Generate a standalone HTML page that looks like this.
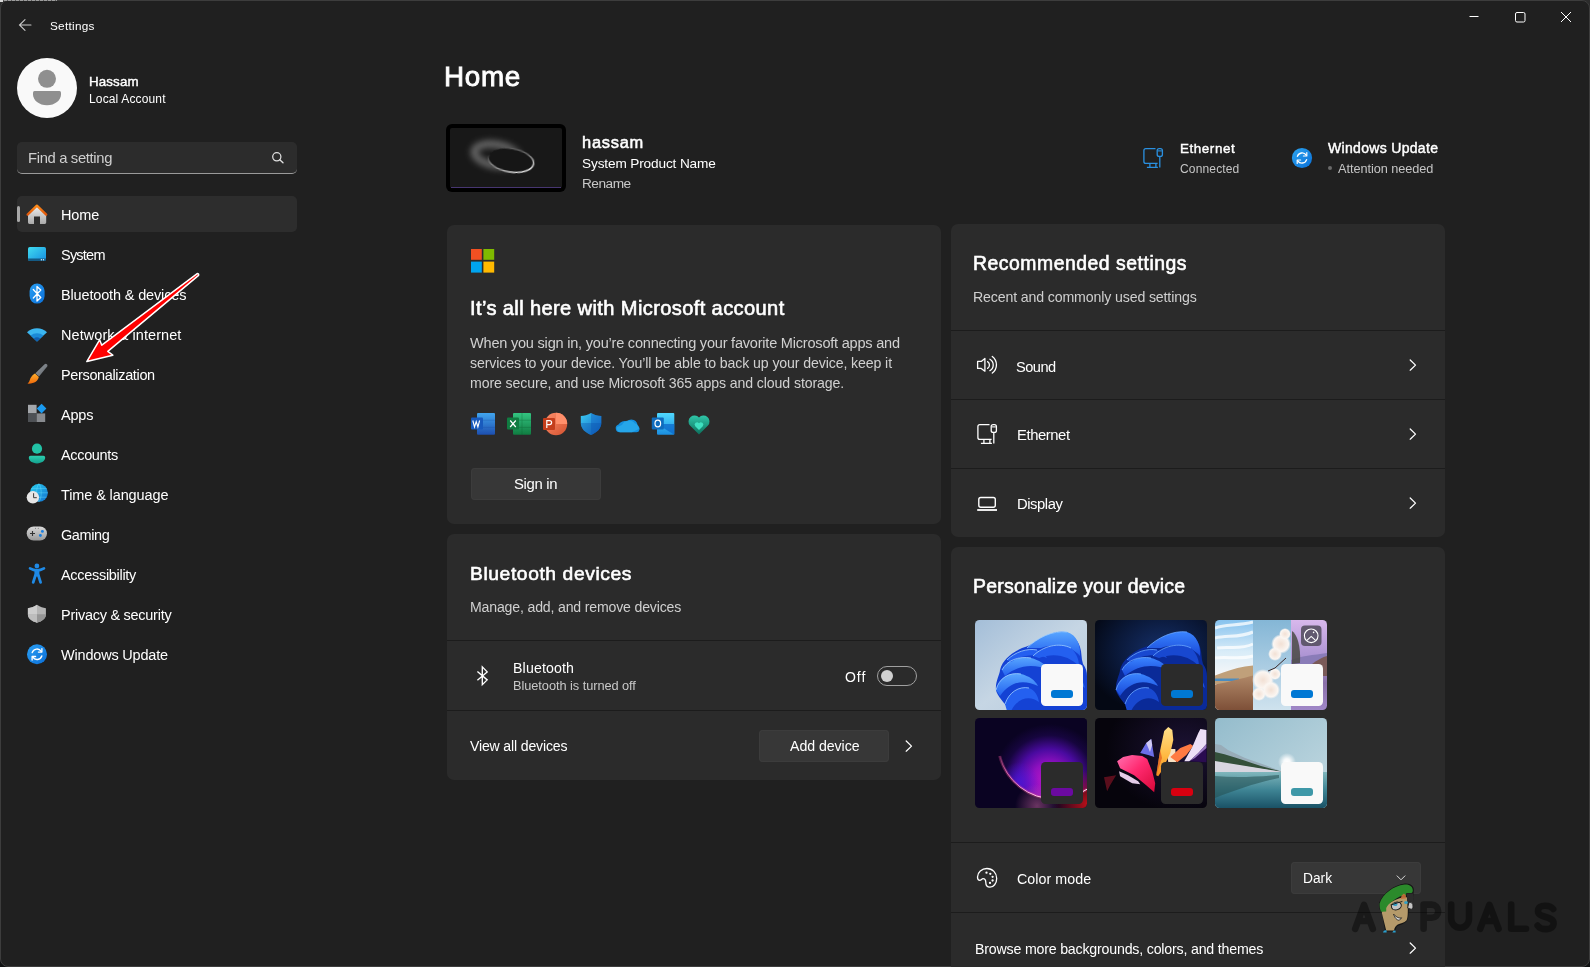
<!DOCTYPE html><html><head><meta charset="utf-8"><style>
*{margin:0;padding:0;box-sizing:border-box}
html,body{width:1590px;height:967px;overflow:hidden;background:linear-gradient(#2c2c2c 0 50%,#101112 50%)}
body{position:relative;font-family:"Liberation Sans",sans-serif}
.t{position:absolute;white-space:pre;will-change:transform}
.a{position:absolute}
#win{position:absolute;left:0;top:0;width:1590px;height:967px;background:#202020;border:1px solid #3d3d3d;border-radius:8px;overflow:hidden}
.card{position:absolute;background:#2b2b2b;border-radius:7px}
.sep{position:absolute;height:1px;background:#1c1c1c}
.btn{position:absolute;background:#373737;border-radius:4px;box-shadow:inset 0 0 0 1px #3c3c3c}
svg{position:absolute;overflow:visible}
</style></head><body><div id="win"></div>

<svg style="left:0;top:0" width="1590" height="967" viewBox="0 0 1590 967">
<path d="M31 25H19.5M25 19.7L19.5 25L25 30.3" stroke="#c9c9c9" stroke-width="1.1" fill="none" stroke-linecap="round"/>
<path d="M1469.5 16.5H1478.5" stroke="#fff" stroke-width="1"/>
<rect x="1515.5" y="12.5" width="9.5" height="9.5" rx="1.5" stroke="#fff" stroke-width="1" fill="none"/>
<path d="M1561 12L1571 22M1571 12L1561 22" stroke="#fff" stroke-width="1"/>
</svg>
<div class="t" style="left:50.40px;top:19.00px;font-size:11.76px;line-height:13px;letter-spacing:0.276px;color:#fff;">Settings</div>
<svg style="left:17px;top:58px" width="60" height="60" viewBox="0 0 60 60"><circle cx="30" cy="30" r="30" fill="#f9f9f9"/><circle cx="30" cy="20.8" r="9" fill="#8f8f8f"/><path d="M16 34.5a1.5 1.5 0 0 1 1.5-1.5h25a1.5 1.5 0 0 1 1.5 1.5v2c0 5.6-6 10.8-14 10.8s-14-5.2-14-10.8z" fill="#8f8f8f"/></svg>
<div class="t" style="left:88.90px;top:74.00px;font-size:13.35px;line-height:15px;letter-spacing:0.122px;color:#fff;-webkit-text-stroke:0.40px #fff;">Hassam</div>
<div class="t" style="left:88.90px;top:92.00px;font-size:12.01px;line-height:14px;letter-spacing:0.149px;color:#fff;">Local Account</div>
<div class="a" style="left:17px;top:142px;width:280px;height:32px;background:#2c2c2c;border-radius:5px;border-bottom:1px solid #9a9a9a"></div>
<div class="t" style="left:27.50px;top:150.00px;font-size:14.80px;line-height:16px;letter-spacing:-0.338px;color:#cfcfcf;">Find a setting</div>
<svg style="left:270px;top:150px" width="16" height="16" viewBox="0 0 16 16"><circle cx="6.8" cy="6.8" r="4.1" stroke="#e0e0e0" stroke-width="1.25" fill="none"/><path d="M9.8 9.8L13 12.8" stroke="#e0e0e0" stroke-width="1.35" stroke-linecap="round"/></svg>
<div class="a" style="left:17px;top:196px;width:280px;height:36px;background:#2d2d2d;border-radius:5px"></div>
<div class="a" style="left:17px;top:206px;width:3px;height:16px;background:#a8a8a8;border-radius:2px"></div>
<div class="t" style="left:60.50px;top:207.00px;font-size:14.49px;line-height:16px;letter-spacing:-0.092px;color:#fff;">Home</div>
<div class="t" style="left:60.50px;top:247.00px;font-size:14.49px;line-height:16px;letter-spacing:-0.767px;color:#fff;">System</div>
<div class="t" style="left:60.50px;top:287.00px;font-size:14.49px;line-height:16px;letter-spacing:-0.147px;color:#fff;">Bluetooth &amp; devices</div>
<div class="t" style="left:60.50px;top:327.00px;font-size:14.49px;line-height:16px;letter-spacing:0.070px;color:#fff;">Network &amp; internet</div>
<div class="t" style="left:60.50px;top:367.00px;font-size:14.49px;line-height:16px;letter-spacing:-0.349px;color:#fff;">Personalization</div>
<div class="t" style="left:60.50px;top:407.00px;font-size:14.49px;line-height:16px;letter-spacing:-0.209px;color:#fff;">Apps</div>
<div class="t" style="left:60.50px;top:447.00px;font-size:14.49px;line-height:16px;letter-spacing:-0.334px;color:#fff;">Accounts</div>
<div class="t" style="left:60.50px;top:487.00px;font-size:14.49px;line-height:16px;letter-spacing:-0.109px;color:#fff;">Time &amp; language</div>
<div class="t" style="left:60.50px;top:527.00px;font-size:14.49px;line-height:16px;letter-spacing:-0.400px;color:#fff;">Gaming</div>
<div class="t" style="left:60.50px;top:567.00px;font-size:14.49px;line-height:16px;letter-spacing:-0.295px;color:#fff;">Accessibility</div>
<div class="t" style="left:60.50px;top:607.00px;font-size:14.49px;line-height:16px;letter-spacing:-0.262px;color:#fff;">Privacy &amp; security</div>
<div class="t" style="left:60.50px;top:647.00px;font-size:14.49px;line-height:16px;letter-spacing:-0.185px;color:#fff;">Windows Update</div>
<svg style="left:0;top:0" width="300" height="700" viewBox="0 0 300 700"><defs><linearGradient id="gHome" x1="0" y1="0" x2="0" y2="1"><stop offset="0" stop-color="#ececec"/><stop offset="1" stop-color="#a9a9a9"/></linearGradient><linearGradient id="gRoof" x1="0" y1="0" x2="0" y2="1"><stop offset="0" stop-color="#ff8c1a"/><stop offset="1" stop-color="#e0560a"/></linearGradient><linearGradient id="gSys" x1="0" y1="0" x2="1" y2="1"><stop offset="0" stop-color="#40dcf0"/><stop offset="1" stop-color="#168ee0"/></linearGradient><linearGradient id="gBlue" x1="0" y1="0" x2="1" y2="1"><stop offset="0" stop-color="#2aa0f4"/><stop offset="1" stop-color="#0a6ed8"/></linearGradient><linearGradient id="gBrush" x1="0" y1="0" x2="1" y2="1"><stop offset="0" stop-color="#9aa0a6"/><stop offset="1" stop-color="#5c6166"/></linearGradient><linearGradient id="gTip" x1="0" y1="0" x2="0" y2="1"><stop offset="0" stop-color="#ffb02e"/><stop offset="1" stop-color="#f06a0a"/></linearGradient><linearGradient id="gTeal" x1="0" y1="0" x2="0" y2="1"><stop offset="0" stop-color="#2ccfb0"/><stop offset="1" stop-color="#14a08e"/></linearGradient><linearGradient id="gGray" x1="0" y1="0" x2="0" y2="1"><stop offset="0" stop-color="#d8d8d8"/><stop offset="1" stop-color="#9a9a9a"/></linearGradient><linearGradient id="gShield" x1="0" y1="0" x2="1" y2="0"><stop offset="0.5" stop-color="#c8c8c8"/><stop offset="0.5" stop-color="#a0a0a0"/></linearGradient></defs>
<path d="M28 214.5L37 206.5L46.2 214.5V222.6a1.4 1.4 0 0 1-1.4 1.4H40V216.4H34V224H29.4a1.4 1.4 0 0 1-1.4-1.4Z" fill="url(#gHome)"/>
<path d="M27.6 214.6L36.9 205.6L46.2 214.6" stroke="url(#gRoof)" stroke-width="2.3" fill="none" stroke-linecap="round" stroke-linejoin="round"/>
<rect x="28" y="247" width="18" height="14" rx="1.8" fill="url(#gSys)"/><path d="M28 258.6H46V259.2a1.8 1.8 0 0 1-1.8 1.8H29.8a1.8 1.8 0 0 1-1.8-1.8Z" fill="#145a84"/><circle cx="41.4" cy="259.7" r="0.7" fill="#d8f0ff"/><circle cx="43.5" cy="259.7" r="0.7" fill="#d8f0ff"/>
<rect x="29.6" y="283.6" width="15" height="20" rx="7.5" fill="url(#gBlue)"/><path d="M33.3 289.5L40.8 297.5L37 301V286.5L40.8 290L33.3 298" stroke="#fff" stroke-width="1.3" fill="none" stroke-linejoin="round" stroke-linecap="round"/>
<path d="M27 332.2A14.5 14.5 0 0 1 47 332.2L37 341.6Z" fill="#3bb6f0"/><path d="M30.6 335.6A9.6 9.6 0 0 1 43.4 335.6L37 341.6Z" fill="#1b8ad8"/><path d="M33.8 338.6A4.8 4.8 0 0 1 40.2 338.6L37 341.6Z" fill="#0f5eb0"/>
<path d="M44.6 364.2a1.8 1.8 0 0 1 2.6 2.4L39 376.6L35.4 373.2Z" fill="url(#gBrush)"/><path d="M35 373.4L38.8 377C38 381 34.4 384 27.4 383.6C29.8 382.2 29.6 378.6 31.6 376.4C32.6 375 33.8 373.8 35 373.4Z" fill="url(#gTip)"/>
<rect x="28" y="404.8" width="8.6" height="8.6" fill="#a4a7ab"/><rect x="28" y="413.4" width="8.6" height="8.6" fill="#4e5155"/><rect x="36.6" y="413.4" width="8.6" height="8.6" fill="#888b8f"/><path d="M41.6 403.8L46.4 408.6L41.6 413.4L36.8 408.6Z" fill="#1a9af0"/>
<circle cx="37" cy="448.7" r="5.1" fill="#22c2a6"/><path d="M28.8 457.6a1.8 1.8 0 0 1 1.8-1.8h12.8a1.8 1.8 0 0 1 1.8 1.8c0 3.4-3.4 5.8-8.2 5.8s-8.2-2.4-8.2-5.8z" fill="url(#gTeal)"/>
<defs><linearGradient id="gGlobe" x1="0" y1="0" x2="1" y2="1"><stop offset="0" stop-color="#2ad0f0"/><stop offset="1" stop-color="#1270d0"/></linearGradient></defs>
<circle cx="38.9" cy="492.8" r="9" fill="url(#gGlobe)"/><path d="M29.9 492.8H47.9M31 488.4H46.8M31 497.2H46.8M38.9 483.8C35.8 487.4 35.8 498.2 38.9 501.8M38.9 483.8C42 487.4 42 498.2 38.9 501.8" stroke="#6ae0ff" stroke-width="0.6" fill="none" opacity="0.7"/>
<circle cx="32.9" cy="497.3" r="6.2" fill="#e6e6e6"/><path d="M33.6 493.2V497.7H36.8" stroke="#3a3a3a" stroke-width="1" fill="none"/>
<rect x="26.7" y="526.6" width="20.3" height="13.8" rx="6.9" fill="url(#gGray)"/><path d="M30 533.5H35M32.5 531V536" stroke="#333" stroke-width="1.1"/><circle cx="42.4" cy="531.4" r="1.45" fill="#1a7fe0"/><circle cx="40.4" cy="535.5" r="1.45" fill="#1a7fe0"/><circle cx="35.4" cy="528.3" r="0.45" fill="#333"/><circle cx="38.2" cy="528.3" r="0.45" fill="#333"/>
<circle cx="36.9" cy="566" r="2.4" fill="#1f8ae6"/><path d="M30 568.4Q37 572.4 44 568.4" stroke="#1f8ae6" stroke-width="2.6" fill="none" stroke-linecap="round"/><rect x="34.4" y="569.8" width="5" height="6.6" rx="1.2" fill="#1f8ae6"/><path d="M35.4 575.4L33.2 582.4M38.4 575.4L40.6 582.4" stroke="#1f8ae6" stroke-width="2.8" fill="none" stroke-linecap="round"/>
<path d="M37 604.8C40.4 607.2 43.2 608 45.9 608.2V614.6C45.9 618.6 42.2 621.4 37 622.8C31.8 621.4 27.9 618.6 27.9 614.6V608.2C30.8 608 33.6 607.2 37 604.8Z" fill="#b4b4b4"/><path d="M37 604.8C33.6 607.2 30.8 608 27.9 608.2V614.2H37Z" fill="#cdcdcd"/><path d="M37 614.2H45.9V614.6C45.9 618.6 42.2 621.4 37 622.8Z" fill="#969696"/><path d="M27.9 614.2H37V622.8C31.8 621.4 27.9 618.6 27.9 614.6Z" fill="#bdbdbd"/>
<circle cx="37" cy="654.3" r="10" fill="url(#gBlue)"/><path d="M32.2 652.6A5 5 0 0 1 41.2 651.4M41.8 656A5 5 0 0 1 32.8 657.2" stroke="#fff" stroke-width="1.4" fill="none" stroke-linecap="round"/><path d="M41.9 648.6V652.1H38.4M32.1 660V656.5H35.6" stroke="#fff" stroke-width="1.3" fill="none" stroke-linecap="round" stroke-linejoin="round"/>
</svg>
<div class="t" style="left:444.30px;top:61.00px;font-size:27.82px;line-height:31px;letter-spacing:0.710px;color:#fff;-webkit-text-stroke:0.86px #fff;">Home</div>
<div class="a" style="left:446px;top:124px;width:120px;height:68px;background:#000;border-radius:6px"></div>
<svg style="left:450px;top:128px" width="112" height="60" viewBox="0 0 112 60"><defs><filter id="blur1" x="-50%" y="-50%" width="200%" height="200%"><feGaussianBlur stdDeviation="3.2"/></filter><filter id="blur2" x="-50%" y="-50%" width="200%" height="200%"><feGaussianBlur stdDeviation="0.45"/></filter><linearGradient id="ringG" gradientUnits="userSpaceOnUse" x1="52" y1="19" x2="66" y2="46"><stop offset="0.1" stop-color="#fff" stop-opacity="0"/><stop offset="0.5" stop-color="#bbb" stop-opacity="0.55"/><stop offset="1" stop-color="#f0f0f0"/></linearGradient></defs><rect width="112" height="60" rx="2" fill="#181818"/><ellipse cx="46" cy="27" rx="22" ry="10.5" transform="rotate(10 46 27)" stroke="#6a6a6a" stroke-width="7" fill="none" filter="url(#blur1)"/><ellipse cx="61" cy="32.4" rx="22.6" ry="11.4" transform="rotate(9 61 32.4)" fill="#151515" filter="url(#blur2)"/><ellipse cx="61" cy="32.4" rx="22.8" ry="11.6" transform="rotate(9 61 32.4)" stroke="url(#ringG)" stroke-width="1.5" fill="none" filter="url(#blur2)"/><rect x="1" y="59" width="110" height="0.9" fill="#4d3a7c"/></svg>
<div class="t" style="left:581.70px;top:133.00px;font-size:16.44px;line-height:18px;letter-spacing:0.735px;color:#fff;-webkit-text-stroke:0.51px #fff;">hassam</div>
<div class="t" style="left:581.70px;top:156.00px;font-size:13.63px;line-height:15px;letter-spacing:-0.137px;color:#fff;">System Product Name</div>
<div class="t" style="left:582.40px;top:176.00px;font-size:13.67px;line-height:15px;letter-spacing:-0.493px;color:#c8c8c8;">Rename</div>
<svg style="left:1136px;top:141.5px" width="34" height="32" viewBox="0 0 34 32"><path d="M19.5 6.6H9.9a2 2 0 0 0-2 2V19.4a2 2 0 0 0 2 2H21.6M13.9 21.4V25.4M19.9 21.4V25.4M10.9 25.4H21.9M23.8 14.4V25.6" stroke="#2a90e0" stroke-width="1.3" fill="none"/><rect x="21.2" y="6.6" width="5.2" height="7.8" rx="2" stroke="#2a90e0" stroke-width="1.3" fill="none"/><path d="M21.8 8.9H25.8" stroke="#2a90e0" stroke-width="1.1"/></svg>
<div class="t" style="left:1179.50px;top:141.00px;font-size:13.43px;line-height:15px;letter-spacing:0.561px;color:#fff;-webkit-text-stroke:0.42px #fff;">Ethernet</div>
<div class="t" style="left:1179.50px;top:162.00px;font-size:12.03px;line-height:14px;letter-spacing:0.146px;color:#c5c5c5;">Connected</div>
<svg style="left:1290px;top:146px" width="24" height="24" viewBox="0 0 24 24"><defs><linearGradient id="gWu" x1="0" y1="0" x2="1" y2="1"><stop offset="0" stop-color="#2ba4f0"/><stop offset="1" stop-color="#0a70d8"/></linearGradient></defs><circle cx="12" cy="12" r="10.1" fill="url(#gWu)"/><path d="M7.4 10.4A4.9 4.9 0 0 1 16.2 9.2M16.6 13.6A4.9 4.9 0 0 1 7.8 14.8" stroke="#fff" stroke-width="1.3" fill="none" stroke-linecap="round"/><path d="M16.8 6.6V10H13.4M7.2 17.4V14H10.6" stroke="#fff" stroke-width="1.2" fill="none" stroke-linecap="round" stroke-linejoin="round"/></svg>
<div class="t" style="left:1327.50px;top:140.00px;font-size:14.02px;line-height:16px;letter-spacing:0.310px;color:#fff;-webkit-text-stroke:0.43px #fff;">Windows Update</div>
<div class="a" style="left:1328px;top:166px;width:4px;height:4px;border-radius:2px;background:#6a6a6a"></div>
<div class="t" style="left:1337.50px;top:161.00px;font-size:12.74px;line-height:15px;letter-spacing:-0.061px;color:#c5c5c5;">Attention needed</div>
<div class="card" style="left:447px;top:225px;width:494px;height:299px"></div>
<svg style="left:471px;top:249px" width="24" height="24" viewBox="0 0 24 24"><rect x="0" y="0" width="10.8" height="10.8" fill="#f25022"/><rect x="12.4" y="0" width="10.8" height="10.8" fill="#7fba00"/><rect x="0" y="12.6" width="10.8" height="11" fill="#00a4ef"/><rect x="12.4" y="12.6" width="10.8" height="11" fill="#ffb900"/></svg>
<div class="t" style="left:470.20px;top:297.00px;font-size:20.09px;line-height:22px;letter-spacing:0.380px;color:#fff;-webkit-text-stroke:0.61px #fff;">It’s all here with Microsoft account</div>
<div class="t" style="left:470.20px;top:335.00px;font-size:14.56px;line-height:16px;letter-spacing:-0.219px;color:#d0d0d0;">When you sign in, you’re connecting your favorite Microsoft apps and</div>
<div class="t" style="left:470.20px;top:355.00px;font-size:14.13px;line-height:16px;letter-spacing:-0.106px;color:#d0d0d0;">services to your device. You’ll be able to back up your device, keep it</div>
<div class="t" style="left:470.20px;top:375.00px;font-size:14.13px;line-height:16px;letter-spacing:-0.101px;color:#d0d0d0;">more secure, and use Microsoft 365 apps and cloud storage.</div>
<svg style="left:0;top:0" width="1590" height="967" viewBox="0 0 1590 967"><defs><linearGradient id="gW" x1="0" y1="0" x2="0" y2="1"><stop offset="0" stop-color="#41a5ee"/><stop offset="1" stop-color="#1d4fb0"/></linearGradient><linearGradient id="gX" x1="0" y1="0" x2="0" y2="1"><stop offset="0" stop-color="#33c481"/><stop offset="1" stop-color="#107c41"/></linearGradient><linearGradient id="gP" x1="0" y1="0" x2="1" y2="1"><stop offset="0" stop-color="#ff8f6b"/><stop offset="1" stop-color="#d35230"/></linearGradient><linearGradient id="gD" x1="0" y1="0" x2="1" y2="1"><stop offset="0" stop-color="#3ccbf4"/><stop offset="1" stop-color="#1060c0"/></linearGradient><linearGradient id="gO" x1="0" y1="0" x2="0" y2="1"><stop offset="0" stop-color="#2aa2e8"/><stop offset="1" stop-color="#0a5fb8"/></linearGradient><linearGradient id="gOl" x1="0" y1="0" x2="0" y2="1"><stop offset="0" stop-color="#50d9ff"/><stop offset="1" stop-color="#1a8ee0"/></linearGradient><linearGradient id="gHe" x1="0" y1="0" x2="0" y2="1"><stop offset="0" stop-color="#2fc6a8"/><stop offset="1" stop-color="#0d6f5c"/></linearGradient></defs>
<rect x="477" y="413" width="18" height="21.7" rx="1" fill="url(#gW)"/><path d="M477 420.2H495M477 427.4H495" stroke="#1a4aa0" stroke-width="0.6" opacity="0.5"/><rect x="471" y="417.5" width="12" height="12" rx="1" fill="#185abd"/><path d="M472.8 420.5L474.5 427L476.2 421.5L477.9 427L479.6 420.5" stroke="#fff" stroke-width="1.1" fill="none"/>
<rect x="513" y="413" width="18" height="21.7" rx="1" fill="url(#gX)"/><path d="M513 420.2H531M513 427.4H531M522 413V434.7" stroke="#0b5a2e" stroke-width="0.6" opacity="0.5"/><rect x="507" y="417.5" width="12" height="12" rx="1" fill="#107c41"/><path d="M510.2 420.5L515.8 427M515.8 420.5L510.2 427" stroke="#fff" stroke-width="1.2"/>
<circle cx="556" cy="424" r="11.2" fill="url(#gP)"/><path d="M556 412.8A11.2 11.2 0 0 1 567.2 424H556Z" fill="#ff8f6b"/><rect x="543" y="418" width="12" height="12" rx="1" fill="#c43e1c"/><path d="M546.8 428V420.6H549.6a2 2 0 0 1 0 4H546.8" stroke="#fff" stroke-width="1.2" fill="none"/>
<path d="M591 413C594 415 598 416 601.3 416V423C601.3 428.5 597 432.5 591 435C585 432.5 580.8 428.5 580.8 423V416C584 416 588 415 591 413Z" fill="url(#gD)"/><path d="M591 413V435C597 432.5 601.3 428.5 601.3 423V416C598 416 594 415 591 413Z" fill="#0f60c0" opacity="0.45"/><path d="M580.8 423H601.3V423C601.3 428.5 597 432.5 591 435C585 432.5 580.8 428.5 580.8 423Z" fill="#0b4fa8" opacity="0.35"/>
<path d="M620 432.3H636a3.2 3.2 0 0 0 1.4-6.2A6 6 0 0 0 627 421.5A7 7 0 0 0 618.5 424.5A4 4 0 0 0 620 432.3Z" fill="#1490df"/><path d="M622 425A7.5 7.5 0 0 1 635 423.5A5 5 0 0 1 638.8 429L632 432.3H620A4 4 0 0 1 617 427Z" fill="#28a8ea" opacity="0.9"/>
<rect x="657" y="413" width="17.3" height="21.7" rx="1" fill="url(#gOl)"/><path d="M657 424L674.3 434.7V424Z" fill="#0a64c8" opacity="0.7"/><rect x="651.8" y="417.5" width="12" height="12" rx="1" fill="#0f6cbd"/><ellipse cx="657.8" cy="423.5" rx="2.8" ry="3.4" stroke="#fff" stroke-width="1.2" fill="none"/>
<path d="M699 434.5L690 425.5A5.6 5.6 0 0 1 699 417.6A5.6 5.6 0 0 1 708 425.5Z" fill="url(#gHe)"/><path d="M699 430L695.2 426.2A2.4 2.4 0 0 1 699 423.2A2.4 2.4 0 0 1 702.8 426.2Z" fill="#3fe0c0"/>
</svg>
<div class="btn" style="left:471px;top:468px;width:130px;height:32px"></div>
<div class="t" style="left:514.20px;top:476.00px;font-size:14.89px;line-height:16px;letter-spacing:-0.329px;color:#fff;">Sign in</div>
<div class="card" style="left:447px;top:534px;width:494px;height:246px"></div>
<div class="t" style="left:469.50px;top:563.00px;font-size:19.26px;line-height:21px;letter-spacing:0.592px;color:#fff;-webkit-text-stroke:0.60px #fff;">Bluetooth devices</div>
<div class="t" style="left:469.50px;top:599.00px;font-size:14.12px;line-height:16px;letter-spacing:-0.172px;color:#cfcfcf;">Manage, add, and remove devices</div>
<div class="sep" style="left:447px;top:640px;width:494px"></div>
<svg style="left:475px;top:665px" width="16" height="24" viewBox="0 0 16 24"><path d="M2.4 6.5L12.2 14.9L7.3 19.7V1.9L12.2 6.9L2.4 15.3" stroke="#fff" stroke-width="1.35" fill="none" stroke-linejoin="miter"/></svg>
<div class="t" style="left:512.80px;top:660.00px;font-size:14.17px;line-height:16px;letter-spacing:0.146px;color:#fff;">Bluetooth</div>
<div class="t" style="left:512.80px;top:678.00px;font-size:12.79px;line-height:15px;letter-spacing:-0.054px;color:#c8c8c8;">Bluetooth is turned off</div>
<div class="t" style="left:844.60px;top:669.00px;font-size:14.02px;line-height:16px;letter-spacing:0.948px;color:#fff;">Off</div>
<div class="a" style="left:877px;top:666px;width:40px;height:20px;border:1px solid #a0a0a0;border-radius:10px"></div>
<div class="a" style="left:881px;top:670px;width:12px;height:12px;border-radius:6px;background:#d0d0d0"></div>
<div class="sep" style="left:447px;top:710px;width:494px"></div>
<div class="t" style="left:470.20px;top:738.00px;font-size:14.07px;line-height:16px;letter-spacing:-0.152px;color:#fff;">View all devices</div>
<div class="btn" style="left:759px;top:730px;width:130px;height:32px"></div>
<div class="t" style="left:789.60px;top:738.00px;font-size:14.17px;line-height:16px;letter-spacing:-0.048px;color:#fff;">Add device</div>
<svg style="left:905.10px;top:739.80px" width="8" height="13" viewBox="0 0 8 13"><path d="M1.2 1L6.5 6.1L1.2 11.2" stroke="#fff" stroke-width="1.25" fill="none" stroke-linecap="round" stroke-linejoin="round"/></svg>
<div class="card" style="left:951px;top:224px;width:494px;height:313px"></div>
<div class="t" style="left:973.40px;top:252.00px;font-size:19.36px;line-height:22px;letter-spacing:0.535px;color:#fff;-webkit-text-stroke:0.60px #fff;">Recommended settings</div>
<div class="t" style="left:973.40px;top:289.00px;font-size:14.17px;line-height:16px;letter-spacing:-0.140px;color:#cfcfcf;">Recent and commonly used settings</div>
<div class="sep" style="left:951px;top:330px;width:494px"></div>
<div class="sep" style="left:951px;top:399px;width:494px"></div>
<div class="sep" style="left:951px;top:468px;width:494px"></div>
<svg style="left:970px;top:350px" width="34" height="30" viewBox="0 0 34 30"><path d="M7.6 11.4H11.2L14.9 8.4V21.2L11.2 18.4H7.6Z" stroke="#fff" stroke-width="1.3" fill="none" stroke-linejoin="round"/><path d="M17.6 11.6A4.05 4.05 0 0 1 17.6 18.4M19.9 9.2A6.55 6.55 0 0 1 19.9 20.6M22.3 6.4A10.5 10.5 0 0 1 22.3 23.1" stroke="#fff" stroke-width="1.3" fill="none" stroke-linecap="round"/></svg>
<div class="t" style="left:1016.40px;top:359.00px;font-size:14.62px;line-height:16px;letter-spacing:-0.539px;color:#fff;">Sound</div>
<svg style="left:1409.10px;top:359.00px" width="8" height="13" viewBox="0 0 8 13"><path d="M1.2 1L6.5 6.1L1.2 11.2" stroke="#fff" stroke-width="1.25" fill="none" stroke-linecap="round" stroke-linejoin="round"/></svg>
<svg style="left:970px;top:418px" width="34" height="32" viewBox="0 0 34 32"><path d="M19.5 6.6H9.9a2 2 0 0 0-2 2V19.4a2 2 0 0 0 2 2H21.6M13.9 21.4V25.4M19.9 21.4V25.4M10.9 25.4H21.9M23.8 14.4V25.6" stroke="#fff" stroke-width="1.3" fill="none"/><rect x="21.2" y="6.6" width="5.2" height="7.8" rx="2" stroke="#fff" stroke-width="1.3" fill="none"/><path d="M21.8 8.9H25.8" stroke="#fff" stroke-width="1.1"/></svg>
<div class="t" style="left:1016.60px;top:427.00px;font-size:14.84px;line-height:16px;letter-spacing:-0.430px;color:#fff;">Ethernet</div>
<svg style="left:1409.10px;top:428.00px" width="8" height="13" viewBox="0 0 8 13"><path d="M1.2 1L6.5 6.1L1.2 11.2" stroke="#fff" stroke-width="1.25" fill="none" stroke-linecap="round" stroke-linejoin="round"/></svg>
<svg style="left:970px;top:488px" width="34" height="32" viewBox="0 0 34 32"><rect x="8.8" y="9.5" width="16.5" height="9.7" rx="2" stroke="#fff" stroke-width="1.4" fill="none"/><path d="M7.2 22H27" stroke="#fff" stroke-width="1.8"/></svg>
<div class="t" style="left:1016.60px;top:496.00px;font-size:14.79px;line-height:16px;letter-spacing:-0.437px;color:#fff;">Display</div>
<svg style="left:1409.10px;top:497.00px" width="8" height="13" viewBox="0 0 8 13"><path d="M1.2 1L6.5 6.1L1.2 11.2" stroke="#fff" stroke-width="1.25" fill="none" stroke-linecap="round" stroke-linejoin="round"/></svg>
<div class="card" style="left:951px;top:547px;width:494px;height:440px"></div>
<div class="t" style="left:973.20px;top:575.00px;font-size:19.42px;line-height:22px;letter-spacing:0.278px;color:#fff;-webkit-text-stroke:0.59px #fff;">Personalize your device</div>
<svg width="0" height="0" style="position:absolute"><defs><linearGradient id="b11" x1="0" y1="0" x2="0" y2="1"><stop offset="0" stop-color="#58a6ff"/><stop offset="1" stop-color="#2462f0"/></linearGradient><linearGradient id="b21" x1="0" y1="0" x2="0" y2="1"><stop offset="0" stop-color="#3a84ff"/><stop offset="1" stop-color="#1848d8"/></linearGradient><linearGradient id="bgL" x1="0" y1="0" x2="1" y2="1"><stop offset="0" stop-color="#a4bed8"/><stop offset="0.5" stop-color="#c6d6e4"/><stop offset="1" stop-color="#b4c8dc"/></linearGradient><radialGradient id="bgD" cx="0.6" cy="0.35" r="0.7"><stop offset="0" stop-color="#16306a"/><stop offset="0.6" stop-color="#0a1838"/><stop offset="1" stop-color="#040814"/></radialGradient><radialGradient id="glow" cx="0.55" cy="0.4" r="0.65"><stop offset="0" stop-color="#b040e0"/><stop offset="0.35" stop-color="#7a1cc0"/><stop offset="0.7" stop-color="#2a0a68"/><stop offset="1" stop-color="#0e0424"/></radialGradient><radialGradient id="glowR" cx="1" cy="0.85" r="0.45"><stop offset="0" stop-color="#e02848" stop-opacity="0.9"/><stop offset="1" stop-color="#e02848" stop-opacity="0"/></radialGradient><linearGradient id="sky6" x1="0" y1="0" x2="0" y2="1"><stop offset="0" stop-color="#9fc2d2"/><stop offset="1" stop-color="#d6e6ee"/></linearGradient><linearGradient id="wat6" x1="0" y1="0" x2="0" y2="1"><stop offset="0" stop-color="#7ab4c0"/><stop offset="1" stop-color="#2a6c7c"/></linearGradient><linearGradient id="s31" x1="0" y1="0" x2="0" y2="1"><stop offset="0" stop-color="#8cc6ee"/><stop offset="0.55" stop-color="#f0f4f8"/><stop offset="0.62" stop-color="#c8b090"/><stop offset="0.7" stop-color="#4a88b8"/><stop offset="0.74" stop-color="#b88a68"/><stop offset="1" stop-color="#8a5a40"/></linearGradient><linearGradient id="s32" x1="0" y1="0" x2="0" y2="1"><stop offset="0" stop-color="#7eb0d0"/><stop offset="1" stop-color="#b8d4e6"/></linearGradient><linearGradient id="s33" x1="0" y1="0" x2="0" y2="1"><stop offset="0" stop-color="#d8b8ec"/><stop offset="0.45" stop-color="#a890d0"/><stop offset="0.7" stop-color="#8a70a8"/><stop offset="1" stop-color="#a088c8"/></linearGradient><radialGradient id="blos" cx="0.5" cy="0.5" r="0.5"><stop offset="0" stop-color="#f4d8d8"/><stop offset="0.7" stop-color="#f8eeee"/><stop offset="1" stop-color="#f8eeee" stop-opacity="0"/></radialGradient></defs></svg>
<svg style="left:975px;top:620px" width="112" height="90" viewBox="0 0 112 90"><defs><clipPath id="ct1"><rect width="112" height="90" rx="4.5"/></clipPath></defs><g clip-path="url(#ct1)"><rect width="112" height="90" fill="url(#bgL)"/><path d="M36 91C30 84 22 76 21 70C20 62 25 54 25 50C26 45 29 41 32 38C38 32 46 28 53 26C60 22 66 20 72 16C78 12 84 11 90 12C97 14 103 20 105 27C107 33 106 38 108 44C111 48 112 52 112 56V91Z" fill="#1442d4"/><path d="M52 28C62 18 78 10 92 12C102 15 106 26 105 36C98 28 84 22 66 28Z" fill="url(#b11)"/><path d="M58 36C68 26 84 22 96 28C102 34 104 40 104 46C94 36 80 32 64 38Z" fill="#2460f0"/><path d="M27 50C32 40 44 36 56 38C64 40 70 44 74 50C60 44 44 44 30 56Z" fill="url(#b11)"/><path d="M32 40C40 32 52 28 62 30C68 32 70 34 72 38C62 34 48 34 36 42Z" fill="#2460f0"/><path d="M21 70C24 58 34 52 46 54C54 56 60 60 63 66C50 60 36 60 25 76Z" fill="url(#b11)"/><path d="M30 84C34 72 44 66 54 68C60 70 63 76 64 82C56 76 44 76 36 91H32Z" fill="#2460f0"/><path d="M66 56C74 48 86 46 96 50C104 54 108 60 110 68C100 60 86 58 72 64Z" fill="url(#b11)"/><path d="M52 28C62 18 78 10 92 12M58 36C68 26 84 22 96 28M27 50C32 40 44 36 56 38M21 70C24 58 34 52 46 54M30 84C34 72 44 66 54 68M66 56C74 48 86 46 96 50M32 40C40 32 52 28 62 30" stroke="#9ccdff" stroke-width="1" fill="none" opacity="0.8"/></g><rect x="66" y="44" width="42" height="42" rx="4.5" fill="#f9f9f9"/><rect x="76" y="70" width="22" height="8" rx="3" fill="#0078d4"/></svg>
<svg style="left:1095px;top:620px" width="112" height="90" viewBox="0 0 112 90"><defs><clipPath id="ct2"><rect width="112" height="90" rx="4.5"/></clipPath></defs><g clip-path="url(#ct2)"><rect width="112" height="90" fill="url(#bgD)"/><path d="M36 91C30 84 22 76 21 70C20 62 25 54 25 50C26 45 29 41 32 38C38 32 46 28 53 26C60 22 66 20 72 16C78 12 84 11 90 12C97 14 103 20 105 27C107 33 106 38 108 44C111 48 112 52 112 56V91Z" fill="#0a2a98"/><path d="M52 28C62 18 78 10 92 12C102 15 106 26 105 36C98 28 84 22 66 28Z" fill="url(#b21)"/><path d="M58 36C68 26 84 22 96 28C102 34 104 40 104 46C94 36 80 32 64 38Z" fill="#1848d0"/><path d="M27 50C32 40 44 36 56 38C64 40 70 44 74 50C60 44 44 44 30 56Z" fill="url(#b21)"/><path d="M32 40C40 32 52 28 62 30C68 32 70 34 72 38C62 34 48 34 36 42Z" fill="#1848d0"/><path d="M21 70C24 58 34 52 46 54C54 56 60 60 63 66C50 60 36 60 25 76Z" fill="url(#b21)"/><path d="M30 84C34 72 44 66 54 68C60 70 63 76 64 82C56 76 44 76 36 91H32Z" fill="#1848d0"/><path d="M66 56C74 48 86 46 96 50C104 54 108 60 110 68C100 60 86 58 72 64Z" fill="url(#b21)"/><path d="M52 28C62 18 78 10 92 12M58 36C68 26 84 22 96 28M27 50C32 40 44 36 56 38M21 70C24 58 34 52 46 54M30 84C34 72 44 66 54 68M66 56C74 48 86 46 96 50M32 40C40 32 52 28 62 30" stroke="#6aa8ff" stroke-width="1" fill="none" opacity="0.8"/></g><rect x="66" y="44" width="42" height="42" rx="4.5" fill="#2b2b2b"/><rect x="76" y="70" width="22" height="8" rx="3" fill="#0078d4"/></svg>
<svg style="left:1215px;top:620px" width="112" height="90" viewBox="0 0 112 90"><defs><clipPath id="ct3"><rect width="112" height="90" rx="4.5"/></clipPath></defs><g clip-path="url(#ct3)"><defs><linearGradient id="s31b" x1="0" y1="0" x2="0" y2="1"><stop offset="0" stop-color="#86c2ee"/><stop offset="0.35" stop-color="#d8ecf8"/><stop offset="0.6" stop-color="#f4f6f8"/></linearGradient><linearGradient id="sand3" x1="0" y1="0" x2="0" y2="1"><stop offset="0" stop-color="#b08868"/><stop offset="1" stop-color="#7e5038"/></linearGradient><linearGradient id="s32b" x1="0" y1="0" x2="0" y2="1"><stop offset="0" stop-color="#84b6d6"/><stop offset="1" stop-color="#cfe2ee"/></linearGradient><radialGradient id="blos2" cx="0.5" cy="0.5" r="0.5"><stop offset="0" stop-color="#f2e0d4"/><stop offset="0.75" stop-color="#fbf6f2"/><stop offset="1" stop-color="#faf4f0" stop-opacity="0"/></radialGradient></defs><rect width="38" height="90" fill="url(#s31b)"/><path d="M0 8C10 4 22 6 38 2M0 18C12 15 24 18 38 12M2 28C14 26 26 30 38 24M0 38C12 36 24 40 38 36" stroke="#fff" stroke-width="3" fill="none" opacity="0.75"/><path d="M0 55.4C10 52 20 48 30 46.5L38 45.6V64H0Z" fill="#c0a07a"/><rect x="0" y="58.5" width="24" height="2.5" fill="#4a8cc0"/><path d="M0 64.5C14 62 28 58 38 55.4V90H0Z" fill="url(#sand3)"/><rect x="38" width="38" height="90" fill="url(#s32b)"/><circle cx="66" cy="24" r="10" fill="url(#blos2)"/><circle cx="70" cy="14" r="6" fill="url(#blos2)"/><circle cx="60" cy="34" r="7" fill="url(#blos2)"/><circle cx="48" cy="60" r="11" fill="url(#blos2)"/><circle cx="56" cy="70" r="9" fill="url(#blos2)"/><circle cx="44" cy="74" r="7" fill="url(#blos2)"/><circle cx="60" cy="54" r="6" fill="url(#blos2)"/><path d="M71 38L60 48L53 51" stroke="#3a2828" stroke-width="1" fill="none"/><rect x="76" width="36" height="90" fill="url(#s33)"/><path d="M76 40C86 36 98 35 112 33V52H76Z" fill="#8a7cb8"/><path d="M97 44C102 40 108 37 112 36V56H97Z" fill="#7a5a58"/><path d="M77 11C82 14 86 26 85 43L77 44Z" fill="#4a4a44" opacity="0.85"/><rect x="86" y="5.5" width="20.5" height="20.5" rx="4" fill="#5c5468" opacity="0.95"/><circle cx="96.2" cy="15.8" r="6.8" stroke="#fff" stroke-width="1.1" fill="none"/><path d="M91.6 20.6L96.2 16.4L100.8 20.6" stroke="#fff" stroke-width="1.1" fill="none"/><circle cx="98.6" cy="12.4" r="0.8" fill="#fff"/></g><rect x="66" y="44" width="42" height="42" rx="4.5" fill="#f9f9f9"/><rect x="76" y="70" width="22" height="8" rx="3" fill="#0078d4"/></svg>
<svg style="left:975px;top:718px" width="112" height="90" viewBox="0 0 112 90"><defs><clipPath id="ct4"><rect width="112" height="90" rx="4.5"/></clipPath></defs><g clip-path="url(#ct4)"><defs><radialGradient id="g4a" gradientUnits="userSpaceOnUse" cx="74" cy="62" r="56"><stop offset="0" stop-color="#c018c8"/><stop offset="0.3" stop-color="#9010c0"/><stop offset="0.55" stop-color="#4a0aa0"/><stop offset="0.8" stop-color="#16053e"/><stop offset="1" stop-color="#0a0322"/></radialGradient><radialGradient id="g4b" gradientUnits="userSpaceOnUse" cx="44" cy="64" r="20"><stop offset="0" stop-color="#4a18e0" stop-opacity="0.75"/><stop offset="1" stop-color="#4a18e0" stop-opacity="0"/></radialGradient><radialGradient id="g4c" gradientUnits="userSpaceOnUse" cx="112" cy="86" r="34"><stop offset="0" stop-color="#c01018" stop-opacity="0.95"/><stop offset="1" stop-color="#c01018" stop-opacity="0"/></radialGradient><radialGradient id="g4d" gradientUnits="userSpaceOnUse" cx="62" cy="88" r="22"><stop offset="0" stop-color="#e070b0" stop-opacity="0.45"/><stop offset="1" stop-color="#e070b0" stop-opacity="0"/></radialGradient><clipPath id="c4in"><circle cx="80" cy="24" r="57"/></clipPath></defs><rect width="112" height="90" fill="#0a0322"/><g clip-path="url(#c4in)"><rect width="112" height="90" fill="url(#g4a)"/><rect width="112" height="90" fill="url(#g4b)"/></g><rect width="112" height="90" fill="url(#g4d)"/><rect width="112" height="90" fill="url(#g4c)"/><defs><linearGradient id="g4arc" gradientUnits="userSpaceOnUse" x1="22" y1="36" x2="70" y2="84"><stop offset="0" stop-color="#ff80c0" stop-opacity="0"/><stop offset="0.3" stop-color="#ff80c0" stop-opacity="0.8"/><stop offset="1" stop-color="#ffe0f0"/></linearGradient></defs><path d="M24.7 38A57 57 0 0 0 80 81A57 57 0 0 0 112 71.2" stroke="#ff50a0" stroke-width="3" fill="none" opacity="0.3"/><path d="M24.7 38A57 57 0 0 0 80 81A57 57 0 0 0 112 71.2" stroke="url(#g4arc)" stroke-width="1" fill="none"/></g><rect x="66" y="44" width="42" height="42" rx="4.5" fill="#2b2b2b"/><rect x="76" y="70" width="22" height="8" rx="3" fill="#6b0aa0"/></svg>
<svg style="left:1095px;top:718px" width="112" height="90" viewBox="0 0 112 90"><defs><clipPath id="ct5"><rect width="112" height="90" rx="4.5"/></clipPath></defs><g clip-path="url(#ct5)"><defs><linearGradient id="pk5" x1="0" y1="0" x2="1" y2="1"><stop offset="0" stop-color="#ff70b0"/><stop offset="0.45" stop-color="#ff2a70"/><stop offset="1" stop-color="#d80838"/></linearGradient><linearGradient id="yl5" x1="0" y1="0" x2="0" y2="1"><stop offset="0" stop-color="#ffe08a"/><stop offset="0.6" stop-color="#ffb840"/><stop offset="1" stop-color="#f08a20"/></linearGradient><radialGradient id="bg5" cx="0.8" cy="0.35" r="0.7"><stop offset="0" stop-color="#1c1234"/><stop offset="1" stop-color="#06040c"/></radialGradient></defs><rect width="112" height="90" fill="url(#bg5)"/><path d="M9 59.2L21.1 57.2L15.1 67.2L12.1 73.3Z" fill="#6a1020" opacity="0.85"/><path d="M45.2 35.1L51.2 25.1L56.2 21.1L57.2 27.1L59.2 39.1L53.2 37.1Z" fill="#6c6ee8"/><path d="M51.2 25.1L56.2 21.1L57.2 27.1L55 34Z" fill="#e8e0f8" opacity="0.8"/><path d="M22.1 43.2L28.1 39.1L37.1 37.1L47.2 38.1L52.2 41.1L57.2 53.2L60.2 65.2L59.2 74.3L51.2 67.2L39.1 57.2L25.1 50.2Z" fill="url(#pk5)"/><path d="M24.1 53.2L33.1 57.2L43.2 63.2L45.2 66.2L37.1 65.2L25.1 58.2Z" fill="#e4cce8"/><path d="M71.3 31.1L80.3 31.1L81.3 44.2L73.3 44.2Z" fill="#f8e2c4"/><path d="M61.2 57.2L65.2 32.1L69.2 13.1L73.3 9L77.3 12.1L78.3 22.1L75.3 35.1L67.2 52.2L63.2 58.2Z" fill="url(#yl5)"/><path d="M61.2 57.2L65.2 32.1L67 40Z" fill="#e05a20" opacity="0.7"/><path d="M75.3 39.1L85.3 30.1L95.3 26.1L98.3 28.1L91.3 37.1L82.3 44.2Z" fill="#ff7a42"/><path d="M95.3 43.2L111.4 26.1V44.2Z" fill="#2a0c50"/><path d="M89.3 43.2L97.3 29.1L103.3 15.1L105.4 11L111.4 12V26.1L103.3 35.1L94.3 43.2Z" fill="#ecdff6"/><path d="M94.3 43.2L103.3 35.1L111.4 26.1V30L100 40Z" fill="#b090d8" opacity="0.8"/></g><rect x="66" y="44" width="42" height="42" rx="4.5" fill="#2b2b2b"/><rect x="76" y="70" width="22" height="8" rx="3" fill="#d80010"/></svg>
<svg style="left:1215px;top:718px" width="112" height="90" viewBox="0 0 112 90"><defs><clipPath id="ct6"><rect width="112" height="90" rx="4.5"/></clipPath></defs><g clip-path="url(#ct6)"><defs><linearGradient id="sky6b" x1="0" y1="0" x2="1" y2="1"><stop offset="0" stop-color="#94bccc"/><stop offset="1" stop-color="#c4dae2"/></linearGradient><radialGradient id="sun6" gradientUnits="userSpaceOnUse" cx="72" cy="44" r="9"><stop offset="0" stop-color="#fff"/><stop offset="0.35" stop-color="#fff" stop-opacity="0.9"/><stop offset="1" stop-color="#fff" stop-opacity="0"/></radialGradient><linearGradient id="wat6b" x1="0" y1="0" x2="0" y2="1"><stop offset="0" stop-color="#80b6bc"/><stop offset="0.5" stop-color="#3e8494"/><stop offset="1" stop-color="#1a5266"/></linearGradient></defs><rect width="112" height="90" fill="url(#sky6b)"/><path d="M0 26L6 27L13 32L30 40L50 47L68 54H0Z" fill="#98acb8"/><path d="M0 34C14 37 30 43 46 48L68 54L0 44Z" fill="#34503a"/><path d="M0 43L68 54L0 56Z" fill="#d8d6e0"/><rect x="0" y="54" width="112" height="36" fill="url(#wat6b)"/><path d="M0 58C20 60 40 59 64 57L64 60C44 64 20 72 0 80Z" fill="#244e50" opacity="0.55"/><rect width="112" height="90" fill="url(#sun6)"/></g><rect x="66" y="44" width="42" height="42" rx="4.5" fill="#f9f9f9"/><rect x="76" y="70" width="22" height="8" rx="3" fill="#3e98a8"/></svg>
<div class="sep" style="left:951px;top:842px;width:494px"></div>
<svg style="left:970px;top:862px" width="34" height="32" viewBox="0 0 34 32"><path d="M16.9 6.5C22.5 6.5 26.7 10.8 26.7 16.4C26.7 21.6 23.4 25.2 20 25.2C17.4 25.2 15.8 23.6 15.8 20.6C15.8 18 14.6 16.6 13 16.6C11.8 16.6 11.2 18.4 9.8 18.4C8.4 18.4 7.5 17 7.5 15C7.5 10.2 11.8 6.5 16.9 6.5Z" stroke="#fff" stroke-width="1.3" fill="none"/><circle cx="16.5" cy="10.7" r="1.15" fill="#fff"/><circle cx="20.3" cy="11.8" r="1.15" fill="#fff"/><circle cx="22.6" cy="14.8" r="1.15" fill="#fff"/><circle cx="22.6" cy="18.5" r="1.15" fill="#fff"/><circle cx="20" cy="20.9" r="1.15" fill="#fff"/></svg>
<div class="t" style="left:1016.50px;top:871.00px;font-size:14.27px;line-height:16px;letter-spacing:0.037px;color:#fff;">Color mode</div>
<div class="btn" style="left:1291px;top:862px;width:130px;height:32px;background:#373737"></div>
<div class="t" style="left:1302.80px;top:871.00px;font-size:13.77px;line-height:15px;letter-spacing:0.001px;color:#fff;">Dark</div>
<svg style="left:1395px;top:873px" width="12" height="9" viewBox="0 0 12 9"><path d="M1.8 2.6L6 6.8L10.2 2.6" stroke="#ddd" stroke-width="1" fill="none"/></svg>
<div class="sep" style="left:951px;top:912px;width:494px"></div>
<div class="t" style="left:974.60px;top:941.00px;font-size:14.19px;line-height:16px;letter-spacing:-0.195px;color:#fff;">Browse more backgrounds, colors, and themes</div>
<svg style="left:1409.10px;top:942.00px" width="8" height="13" viewBox="0 0 8 13"><path d="M1.2 1L6.5 6.1L1.2 11.2" stroke="#fff" stroke-width="1.25" fill="none" stroke-linecap="round" stroke-linejoin="round"/></svg>
<svg style="left:0;top:0" width="1590" height="967" viewBox="0 0 1590 967">
<g stroke="#000" stroke-opacity="0.42" stroke-width="6.6" fill="none" stroke-linecap="round" stroke-linejoin="round"><path d="M1355.2 928.8L1364 904.8L1372.8 928.8M1359.6 921H1368.4"/><path d="M1423.6 928.8V904.6H1431.6a6.6 6.6 0 0 1 0 13.2H1423.6"/><path d="M1451.2 904.6V918.8a8.9 8.9 0 0 0 17.8 0V904.6"/><path d="M1480.2 928.8L1489.4 904.8L1498.6 928.8M1484.8 921H1494"/><path d="M1511.2 904.6V928.8H1526"/><path d="M1553.2 909C1550.5 905 1538 903.5 1538 911.2C1538 918.2 1553.6 915.8 1553.6 923.2C1553.6 931 1541 930.4 1537.6 925.6"/></g>
<path d="M1379 903C1383 893 1394 885 1405 883.6C1411 883.2 1414.4 886.6 1413.8 891C1413.6 893 1413.4 895 1413 897C1413.4 901 1413 906 1409 908C1408.6 914 1408.6 920 1406 922C1403 924.6 1399 925 1396.8 926.6L1395 931.6H1385L1382 913C1380 912 1379 908 1379 903Z" fill="#161616"/>
<path d="M1381.8 912.8C1383 908 1387 904 1393 901C1398 898.6 1403 897 1407 897.4L1407.8 907C1407.8 912 1408 918 1406.4 920.6C1404.4 923 1400 923.6 1397.8 924.6C1395.4 926 1394.6 928 1394 930.4H1386.2Z" fill="#b59a6a"/>
<path d="M1379.6 903.4C1383 894 1393 886 1404.6 884.6C1409.6 884.2 1412.8 886.8 1412.8 890.4C1412.8 892 1412 893 1410.6 893H1406.4L1406 895C1402 895 1398 897.4 1393.4 900.4C1390 902.6 1387.4 905 1386.2 908V911.6L1381 911.8C1380 909 1379.4 906 1379.6 903.4Z" fill="#2b8a2b"/>
<path d="M1401.6 895.6L1404 893.6L1406 895.6L1405.8 898.6L1400.8 899Z" fill="#c8703a" opacity="0.9"/>
<path d="M1406.6 893.4H1413L1413.2 907.4L1408 907.6Z" fill="#2c2c2c"/>
<ellipse cx="1396.4" cy="906" rx="5" ry="3.8" transform="rotate(-18 1396.4 906)" fill="#c4c4c4" stroke="#151515" stroke-width="1"/><path d="M1409 902.2A3.4 4 0 0 1 1411.6 909.4L1407.6 908Z" fill="#c4c4c4" stroke="#151515" stroke-width="0.8"/>
<ellipse cx="1395.2" cy="904.4" rx="2.2" ry="1.6" fill="#34a0c4"/><ellipse cx="1406" cy="902.4" rx="1.9" ry="1.5" fill="#34a0c4"/><path d="M1390.6 905L1402.4 901.4" stroke="#151515" stroke-width="0.9"/>
<path d="M1393.6 914.2C1396.4 917.4 1399.6 918.6 1401.6 917.8L1399.4 920.2C1397 920.4 1394.8 918 1393.6 914.2Z" fill="#e4e4e4" stroke="#151515" stroke-width="0.8"/>
<path d="M1383 932.5C1383.6 930.2 1385.4 929.6 1386.6 930.6V932.5ZM1392.4 932.5C1393 930.6 1394.6 930 1395.6 930.8V932.5Z" fill="#2aa0d0"/>
</svg>
<svg style="left:0;top:0" width="300" height="400" viewBox="0 0 300 400"><path d="M86.8 361.6L99.6 339.8L101.8 345.2L197.2 273.6Q199 273.6 198.6 275.4L107.8 351.4L112.8 355.2Z" fill="#ff0000" stroke="#fff" stroke-width="1.5" stroke-linejoin="round"/></svg>
<div class="a" style="left:0;top:0;width:57px;height:1px;background:repeating-linear-gradient(90deg,#9c9c9c 0 3px,#5a5a5a 3px 4px)"></div><div class="a" style="left:0;top:0;width:3px;height:2px;background:#d8d8d8"></div>
</body></html>
